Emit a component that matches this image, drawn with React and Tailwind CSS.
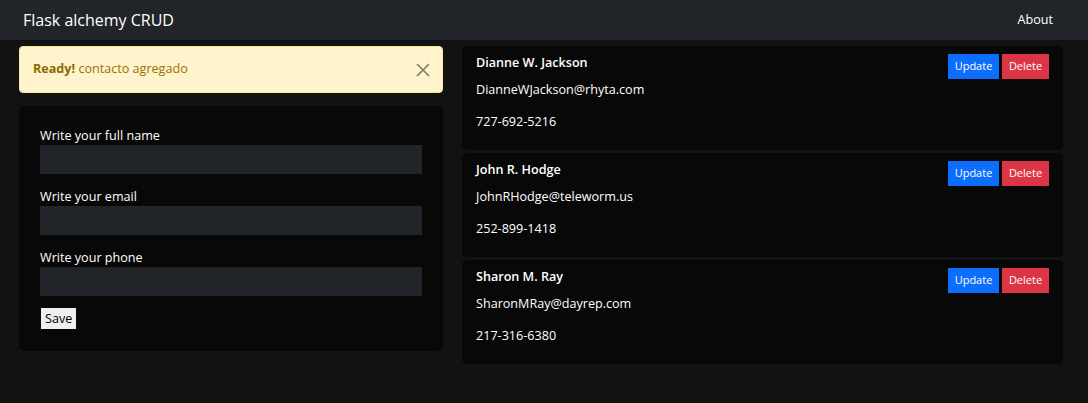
import React from "react";

const contacts = [
  { name: "Dianne W. Jackson", email: "DianneWJackson@rhyta.com", phone: "727-692-5216" },
  { name: "John R. Hodge", email: "JohnRHodge@teleworm.us", phone: "252-899-1418" },
  { name: "Sharon M. Ray", email: "SharonMRay@dayrep.com", phone: "217-316-6380" },
];

function Field({ label }) {
  return (
    <div className="flex flex-col">
      <label className="text-[12.6px] leading-[18px] text-white">{label}</label>
      <input className="h-[29px] w-full bg-[#212529] outline-none" />
    </div>
  );
}

export default function App() {
  return (
    <div className="min-h-[403px] bg-[#121212] text-white" style={{ fontFamily: '"Open Sans", "Noto Sans", sans-serif' }}>
      <nav className="flex h-[40px] items-center justify-between bg-[#212529] pl-[23px] pr-[35px]">
        <span className="text-[16px] text-white">Flask alchemy CRUD</span>
        <span className="text-[12.6px] text-white">About</span>
      </nav>
      <div className="flex gap-[19px] pl-[19px] pt-[6px]">
        <div className="flex w-[424px] flex-col gap-[13px]">
          <div className="flex h-[47px] items-center justify-between rounded-[4px] border border-[#ffe69c] bg-[#fff3cd] pl-[13px] pr-[10px] text-[12.6px] text-[#997404]">
            <span>
              <b className="text-[#8a6a02]">Ready!</b> contacto agregado
            </span>
            <svg width="14" height="14" viewBox="0 0 14 14" className="mr-[2px]">
              <path d="M1 1L13 13M13 1L1 13" stroke="#7a7a6a" strokeWidth="1.6" />
            </svg>
          </div>
          <div className="flex flex-col gap-[9px] rounded-[5px] bg-[#080808] px-[21px] pb-[22px] pt-[21px]">
            <div className="flex flex-col gap-[14px]">
              <Field label="Write your full name" />
              <Field label="Write your email" />
              <Field label="Write your phone" />
            </div>
            <div>
              <button className="ml-[1px] h-[21px] bg-[#efefef] px-[4px] text-[12.6px] leading-[21px] text-black">Save</button>
            </div>
          </div>
        </div>
        <div className="flex w-[601px] flex-col gap-[3px]">
          {contacts.map((c) => (
            <div key={c.name} className="flex h-[104px] justify-between rounded-[5px] bg-[#080808] pl-[14px] pr-[14px] pt-[8px]">
              <div className="flex flex-col text-[12.6px]">
                <span className="font-semibold leading-[18px]">{c.name}</span>
                <span className="mt-[9px] leading-[18px]">{c.email}</span>
                <span className="mt-[14px] leading-[18px]">{c.phone}</span>
              </div>
              <div className="flex h-[25px] gap-[3px] text-[11px]">
                <button className="w-[51px] bg-[#0d6efd] text-white">Update</button>
                <button className="w-[47px] bg-[#dc3545] text-white">Delete</button>
              </div>
            </div>
          ))}
        </div>
      </div>
    </div>
  );
}
